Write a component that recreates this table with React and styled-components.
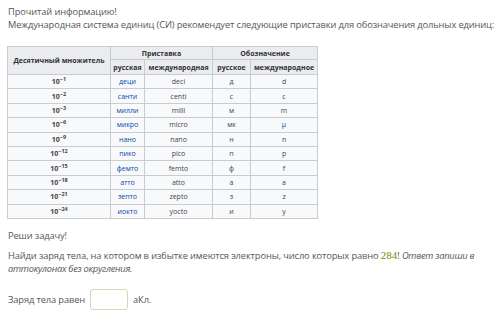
import React from "react";
import styled, { createGlobalStyle } from "styled-components";

const Global = createGlobalStyle`
  html, body { margin: 0; padding: 0; background: #fff; }
  body { font-family: "Open Sans", "DejaVu Sans", sans-serif; color: #555; }
`;

const Page = styled.div`
  padding: 5px 8px 0 8px;
  font-size: 9.3px;
  letter-spacing: -0.12px;
  line-height: 13px;
`;

const Para = styled.p`
  margin: ${(p) => p.$mt || 0}px 0 0 0;
  white-space: nowrap;
`;

const Em = styled.i`
  font-style: italic;
  letter-spacing: -0.25px;
`;

const Table = styled.table`
  border-collapse: collapse;
  table-layout: fixed;
  width: 310px;
  margin: 15px 0 0 -1px;
  font-family: "Open Sans", sans-serif;
  font-size: 7px;
  letter-spacing: 0;
  line-height: 11px;
  color: #222;
  background: #f8f9fa;
`;

const Th = styled.th`
  background: #eaecf0;
  border: 1px solid #c8ccd1;
  font-weight: 700;
  color: #333;
  padding: 0 1px;
  height: ${(p) => p.$h || 12}px;
  text-align: center;
  white-space: nowrap;
  overflow: hidden;
`;

const Td = styled.td`
  border: 1px solid #c8ccd1;
  padding: 0 1px;
  height: 13.4px;
  text-align: center;
  color: ${(p) => (p.$link ? "#0645ad" : "#444")};
  font-weight: ${(p) => (p.$bold ? 700 : 400)};
  white-space: nowrap;
`;

const Sup = styled.sup`
  font-size: 5.5px;
  line-height: 0;
  vertical-align: 3px;
`;

const Num = styled.span`
  font-family: "Liberation Serif", serif;
  color: #7a8a00;
  font-size: 11px;
  letter-spacing: 0;
`;

const Answer = styled.div`
  display: flex;
  align-items: center;
  gap: 5px;
  margin-top: 14px;
`;

const Input = styled.span`
  display: inline-block;
  width: 36px;
  height: 19px;
  border: 1px solid #d6d6b8;
  border-radius: 3px;
  background: #fff;
`;

const rows = [
  ["1", "деци", "deci", "д", "d"],
  ["2", "санти", "centi", "с", "c"],
  ["3", "милли", "milli", "м", "m"],
  ["6", "микро", "micro", "мк", "μ", true],
  ["9", "нано", "nano", "н", "n"],
  ["12", "пико", "pico", "п", "p"],
  ["15", "фемто", "femto", "ф", "f"],
  ["18", "атто", "atto", "а", "a"],
  ["21", "зепто", "zepto", "з", "z"],
  ["24", "иокто", "yocto", "и", "y"],
];

export default function App() {
  return (
    <>
      <Global />
      <Page>
        <Para>Прочитай информацию!</Para>
        <Para>
          Международная система единиц (СИ) рекомендует следующие приставки для обозначения дольных единиц:
        </Para>
        <Table>
          <colgroup>
            <col style={{ width: 103 }} />
            <col style={{ width: 34 }} />
            <col style={{ width: 68 }} />
            <col style={{ width: 38 }} />
            <col style={{ width: 67 }} />
          </colgroup>
          <thead>
            <tr>
              <Th rowSpan={2}>Десятичный множитель</Th>
              <Th colSpan={2}>Приставка</Th>
              <Th colSpan={2}>Обозначение</Th>
            </tr>
            <tr>
              <Th $h={14}>русская</Th>
              <Th $h={14}>международная</Th>
              <Th $h={14}>русское</Th>
              <Th $h={14}>международное</Th>
            </tr>
          </thead>
          <tbody>
            {rows.map((r) => (
              <tr key={r[0]}>
                <Td $bold>
                  10<Sup>−{r[0]}</Sup>
                </Td>
                <Td $link>{r[1]}</Td>
                <Td>{r[2]}</Td>
                <Td>{r[3]}</Td>
                <Td $link={r[5]}>{r[4]}</Td>
              </tr>
            ))}
          </tbody>
        </Table>
        <Para $mt={10}>Реши задачу!</Para>
        <Para $mt={7}>
          Найди заряд тела, на котором в избытке имеются электроны, число которых равно <Num>284</Num>! <Em>Ответ запиши в</Em>
        </Para>
        <Para><Em>аттокулонах без округления.</Em></Para>
        <Answer>
          <span>Заряд тела равен</span>
          <Input />
          <span>аКл.</span>
        </Answer>
      </Page>
    </>
  );
}
